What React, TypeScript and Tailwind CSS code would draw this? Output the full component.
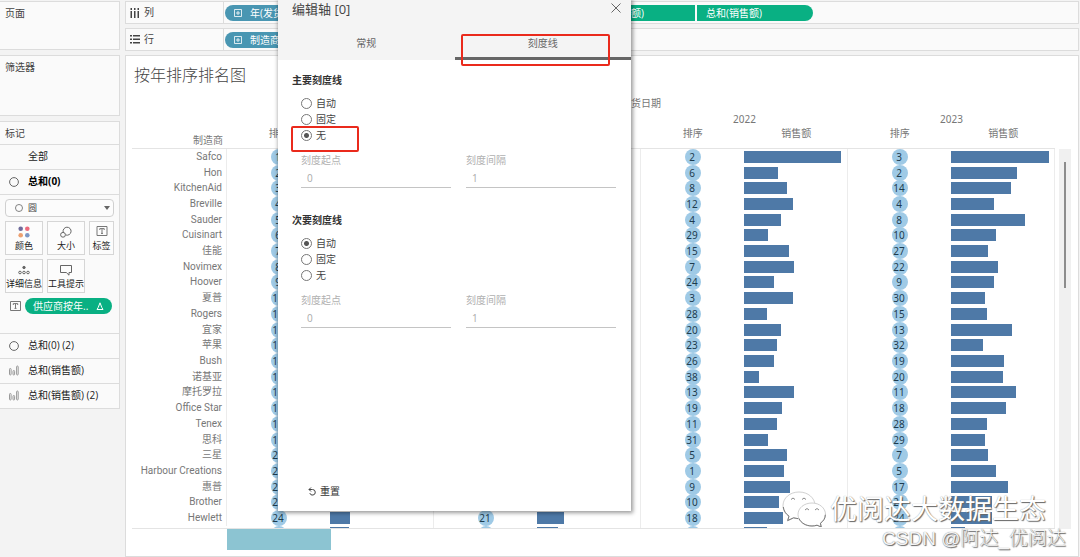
import type { ReactNode } from "react";

type Row = { name: string; y20: number; y22: [number, number]; y23: [number, number] };

// Sales values are percentages of the axis length.
const rows: Row[] = [
  { name: "Safco", y20: 1, y22: [2, 94], y23: [3, 95] },
  { name: "Hon", y20: 2, y22: [6, 33], y23: [2, 64] },
  { name: "KitchenAid", y20: 3, y22: [8, 42], y23: [14, 58] },
  { name: "Breville", y20: 4, y22: [12, 48], y23: [4, 42] },
  { name: "Sauder", y20: 5, y22: [4, 36], y23: [8, 72] },
  { name: "Cuisinart", y20: 6, y22: [29, 23], y23: [10, 44] },
  { name: "佳能", y20: 7, y22: [15, 44], y23: [27, 36] },
  { name: "Novimex", y20: 8, y22: [7, 49], y23: [22, 46] },
  { name: "Hoover", y20: 9, y22: [24, 29], y23: [9, 42] },
  { name: "夏普", y20: 10, y22: [3, 48], y23: [30, 33] },
  { name: "Rogers", y20: 11, y22: [28, 22], y23: [15, 35] },
  { name: "宜家", y20: 12, y22: [20, 36], y23: [13, 59] },
  { name: "苹果", y20: 13, y22: [23, 32], y23: [32, 31] },
  { name: "Bush", y20: 14, y22: [26, 29], y23: [19, 51] },
  { name: "诺基亚", y20: 15, y22: [38, 15], y23: [20, 50] },
  { name: "摩托罗拉", y20: 16, y22: [13, 49], y23: [11, 63] },
  { name: "Office Star", y20: 17, y22: [19, 37], y23: [18, 53] },
  { name: "Tenex", y20: 18, y22: [11, 32], y23: [28, 35] },
  { name: "思科", y20: 19, y22: [31, 23], y23: [29, 33] },
  { name: "三星", y20: 20, y22: [5, 42], y23: [7, 36] },
  { name: "Harbour Creations", y20: 21, y22: [1, 39], y23: [5, 44] },
  { name: "惠普", y20: 22, y22: [9, 45], y23: [17, 55] },
  { name: "Brother", y20: 23, y22: [10, 34], y23: [21, 40] },
  { name: "Hewlett", y20: 24, y22: [18, 38], y23: [24, 40] },
];

const years = ["2020", "2021", "2022", "2023"];

// Bars of the row that is only partly scrolled into view.
const nextRow = [18, 20, 22, 14];

function RowIcon() {
  return (
    <svg width="10" height="9" viewBox="0 0 10 9" className="fill-[#444]">
      <path d="M0 0h2v1.500H0zM3 0h7v1.500H3zM0 3.500h2V5H0zM3 3.500h7V5H3zM0 7h2v1.500H0zM3 7h7v1.500H3z" />
    </svg>
  );
}

function ColumnIcon() {
  return (
    <svg width="10" height="10" viewBox="0 0 10 10" className="fill-[#444]">
      <path d="M.5 0h1.500v2H.5zM.5 3h1.500v7H.5zM4 0h1.500v2H4zM4 3h1.500v7H4zM7.500 0H9v2H7.500zM7.500 3H9v7H7.500z" />
    </svg>
  );
}

function PlusBox() {
  return (
    <svg width="8" height="8" viewBox="0 0 8 8" fill="none" className="shrink-0 stroke-white/80">
      <path d="M.5.5h7v7h-7zM2 4h4M4 2v4" />
    </svg>
  );
}

function CircleIcon({ size }: { size: number }) {
  return (
    <svg width={size} height={size} viewBox="0 0 10 10" fill="none" className="shrink-0 stroke-[#666]">
      <circle cx="5" cy="5" r="4.400" />
    </svg>
  );
}

function BarsIcon() {
  return (
    <svg width="10" height="11" viewBox="0 0 10 11" fill="none" className="shrink-0 stroke-[#999]">
      <rect x=".5" y="3.500" width="1.600" height="6.500" rx=".8" />
      <rect x="4" y="5.500" width="1.600" height="4.500" rx=".8" />
      <rect x="7.600" y="1" width="1.600" height="9" rx=".8" />
    </svg>
  );
}

function TextIcon({ width }: { width: number }) {
  return (
    <svg width={width} height="10" viewBox="0 0 11 10" fill="none" className="shrink-0 stroke-[#777]">
      <path d="M.5.5h10v9H.5zM3.300 4V2.600h4.400V4M5.500 2.600v4.800M4.500 7.400h2" />
    </svg>
  );
}

function Shelf({ icon, label, children }: { icon: ReactNode; label: string; children: ReactNode }) {
  return (
    <div className="flex h-[23px] items-stretch overflow-hidden border border-[#dcdcdc] bg-[#fafafa]">
      <div className="flex w-[98px] shrink-0 items-center gap-1 border-r border-[#dcdcdc] pl-1 text-[10px] text-[#444]">
        {icon}
        <span>{label}</span>
      </div>
      <div className="flex items-center gap-[2px] pl-px">{children}</div>
    </div>
  );
}

const pillBase = "flex h-4 w-[116px] shrink-0 items-center gap-2 pl-[9px] text-[10px] leading-4 text-white";

function MarkButton({ icon, label }: { icon: ReactNode; label: string }) {
  return (
    <button className="flex h-[34px] flex-col items-center justify-between overflow-hidden border border-[#d6d6d6] bg-[#fcfcfc] pt-1 pb-[2px] text-[9px] leading-3 whitespace-nowrap text-[#222]">
      {icon}
      <span>{label}</span>
    </button>
  );
}

function MarkLayer({ icon, label, strong }: { icon?: ReactNode; label: string; strong?: boolean }) {
  return (
    <button
      className={
        strong
          ? "flex h-[25px] w-full items-center border-t border-[#dcdcdc] pb-px pl-[9px] text-left text-[10px] font-bold text-black"
          : "flex h-[25px] w-full items-center border-t border-[#dcdcdc] pb-px pl-[9px] text-left text-[10px] text-[#222]"
      }
    >
      <span className="flex w-[19px]">{icon}</span>
      {label}
    </button>
  );
}

function Sidebar() {
  return (
    <aside className="flex w-[120px] shrink-0 flex-col gap-[5px] pt-px text-[10px] text-[#444]">
      <section className="h-[49px] border border-l-0 border-[#dcdcdc] bg-[#fafafa] px-[5px] pt-[3px] leading-4">页面</section>
      <section className="h-[61px] border border-l-0 border-[#dcdcdc] bg-[#fafafa] px-[5px] pt-[3px] leading-4">筛选器</section>
      <section className="border border-l-0 border-[#dcdcdc] bg-[#fafafa]">
        <h2 className="h-[22px] px-[5px] pt-[3px] leading-4">标记</h2>
        <MarkLayer label="全部" />
        <MarkLayer icon={<CircleIcon size={10} />} label="总和(0)" strong />
        <div className="border-t border-[#dcdcdc] px-[5px] pt-1">
          <div className="relative">
            <select
              aria-label="标记类型"
              className="block h-[18px] w-full appearance-none rounded-sm border border-[#d0d0d0] bg-[#fcfcfc] pl-[22px] text-[9px] leading-4 text-[#444]"
            >
              <option>圆</option>
            </select>
            <span className="pointer-events-none absolute inset-y-0 left-[10px] flex items-center">
              <CircleIcon size={8} />
            </span>
            <span className="pointer-events-none absolute inset-y-0 right-1 flex items-center">
              <svg width="6" height="4" viewBox="0 0 6 4" className="fill-[#666]">
                <path d="M0 0h6L3 4z" />
              </svg>
            </span>
          </div>
          <div className="mt-1 grid grid-cols-[38px_38px_25px] gap-x-1 gap-y-1">
            <MarkButton
              label="颜色"
              icon={
                <svg width="12" height="12" viewBox="0 0 12 12">
                  <circle cx="2.700" cy="2.700" r="2.300" fill="#6f6b9b" />
                  <circle cx="9.300" cy="2.700" r="2.300" fill="#ed6a7c" />
                  <circle cx="2.700" cy="9.300" r="2.300" fill="#eda070" />
                  <circle cx="9.300" cy="9.300" r="2.300" fill="#7d98c6" />
                </svg>
              }
            />
            <MarkButton
              label="大小"
              icon={
                <svg width="12" height="12" viewBox="0 0 12 12" fill="none" className="stroke-[#666]">
                  <path d="M3.200 6.200A4 4 0 1 1 5.800 9" />
                  <circle cx="3" cy="8.800" r="2.400" />
                </svg>
              }
            />
            <MarkButton label="标签" icon={<TextIcon width={12} />} />
            <MarkButton
              label="详细信息"
              icon={
                <svg width="12" height="12" viewBox="0 0 12 12" fill="none" className="stroke-[#666]">
                  <circle cx="6" cy="3.500" r="1.200" fill="#666" />
                  <circle cx="2" cy="8.500" r="1.300" />
                  <circle cx="6" cy="8.500" r="1.300" />
                  <circle cx="10" cy="8.500" r="1.300" />
                </svg>
              }
            />
            <MarkButton
              label="工具提示"
              icon={
                <svg width="12" height="12" viewBox="0 0 12 12" fill="none" className="stroke-[#666]">
                  <path d="M.5 1.500h11v7H9v2.700L6.300 8.500H.5z" />
                </svg>
              }
            />
          </div>
          <div className="flex h-[40px] items-start gap-1 pt-[5px] pl-[5px]">
            <span className="flex h-4 items-center">
              <TextIcon width={11} />
            </span>
            <button className="flex h-4 w-[87px] items-center justify-between rounded-full bg-[#09b083] pr-2 pl-2 text-[10px] leading-4 text-white">
              供应商按年..
              <svg width="8" height="8" viewBox="0 0 8 8" fill="none" className="stroke-white">
                <path d="M4 .8 5.800 5.500 7 7.500H1l1.200-2z" />
              </svg>
            </button>
          </div>
        </div>
        <MarkLayer icon={<CircleIcon size={10} />} label="总和(0) (2)" />
        <MarkLayer icon={<BarsIcon />} label="总和(销售额)" />
        <MarkLayer icon={<BarsIcon />} label="总和(销售额) (2)" />
      </section>
    </aside>
  );
}

function RankCell({ rank }: { rank: number }) {
  return (
    <td className="flex flex-1 basis-0 items-center justify-center">
      <span className="flex h-4 w-4 shrink-0 items-center justify-center rounded-full bg-[#9fcae6] pr-px text-[10px] leading-4 text-[#1d3b4e]">
        {rank}
      </span>
    </td>
  );
}

function BarCell({ value }: { value: number }) {
  return (
    <td className="flex flex-1 basis-0 items-center border-r border-[#ececec]">
      <div className="h-3 bg-[#4e79a7]" style={{ width: `${value}%` }} />
    </td>
  );
}

function DataRow({ row }: { row: Row }) {
  return (
    <tr className="flex min-h-0 flex-1 basis-0">
      <th
        scope="row"
        className="flex w-[95px] shrink-0 items-center justify-end border-r border-[#ececec] pr-1 font-['Roboto','Noto_Sans_CJK_SC',sans-serif] text-[10px] leading-3 font-normal whitespace-nowrap text-[#777]"
      >
        {row.name}
      </th>
      <RankCell rank={row.y20} />
      <BarCell value={19} />
      <RankCell rank={21} />
      <BarCell value={26} />
      <RankCell rank={row.y22[0]} />
      <BarCell value={row.y22[1]} />
      <RankCell rank={row.y23[0]} />
      <BarCell value={row.y23[1]} />
    </tr>
  );
}

function Worksheet() {
  return (
    <section className="flex-1 border border-[#dcdcdc] bg-white pr-[7px] pl-[6px]">
      <h1 className="pt-2 pl-[2px] font-['Liberation_Serif','Noto_Sans_CJK_SC',serif] text-[16px] leading-6 font-light text-[#444]">
        按年排序排名图
      </h1>
      <div className="mt-[7px] flex items-end">
        <table className="block min-w-0 flex-1 font-['Noto_Sans','Noto_Sans_CJK_SC',sans-serif] text-[10px] text-[#777]">
          <thead className="block border-b border-[#e4e4e4]">
            <tr className="flex h-4 pl-[95px]">
              <th className="flex-1 text-center leading-4 font-normal">发货日期</th>
            </tr>
            <tr className="flex h-[14px] pl-[95px]">
              {years.map((y) => (
                <th key={y} className="flex-1 basis-0 text-center leading-4 font-normal">
                  {y}
                </th>
              ))}
            </tr>
            <tr className="flex h-[23px]">
              <th className="w-[95px] shrink-0 self-end pr-1 text-right leading-4 font-normal">制造商</th>
              {years.map((y) => [
                <th key={`${y}-rank`} className="flex-1 basis-0 text-center leading-4 font-normal">
                  排序
                </th>,
                <th key={`${y}-sales`} className="flex-1 basis-0 text-center leading-4 font-normal">
                  销售额
                </th>,
              ])}
            </tr>
          </thead>
          <tbody className="flex h-[377px] flex-col">
            {rows.map((row) => (
              <DataRow key={row.name} row={row} />
            ))}
          </tbody>
          <tfoot className="block h-[3px] overflow-hidden border-b border-[#e4e4e4]" aria-hidden="true">
            <tr className="flex pl-[95px]">
              {nextRow.map((value, i) => [
                <td key={`${years[i]}-rank`} className="flex flex-1 basis-0 justify-center">
                  <span className="h-4 w-4 rounded-full bg-[#9fcae6]" />
                </td>,
                <td key={`${years[i]}-sales`} className="flex-1 basis-0 border-r border-[#ececec] pt-px">
                  <div className="h-3 bg-[#4e79a7]" style={{ width: `${value}%` }} />
                </td>,
              ])}
            </tr>
          </tfoot>
        </table>
        <div className="ml-1 flex h-[380px] w-3 justify-center bg-[#f0f0f0] pt-[13px]">
          <div className="h-[126px] w-[2px] bg-[#8c8c8c]" />
        </div>
      </div>
      <div className="flex pr-4 pl-[95px]">
        <div className="h-[21px] w-1/8 bg-[#8cc4d2]" />
      </div>
    </section>
  );
}

const radioClass =
  "h-[11px] w-[11px] appearance-none rounded-full border border-[#777] bg-white checked:border-[#777] checked:bg-[radial-gradient(circle,#555_0_2px,transparent_3px)]";

function TickGroup({ id, title, selected, className }: { id: string; title: string; selected: string; className: string }) {
  return (
    <fieldset className={className}>
      <legend className="text-[10px] leading-4 font-semibold text-[#333]">{title}</legend>
      <div className="mt-[7px] flex flex-col pl-[9px]">
        {["自动", "固定", "无"].map((option) => (
          <label key={option} className="flex h-4 items-center gap-1 text-[10px] leading-4 text-[#444]">
            <input type="radio" name={id} defaultChecked={option === selected} className={radioClass} />
            {option}
          </label>
        ))}
      </div>
      <div className="mt-[9px] flex gap-[15px] pl-[9px]">
        <label className="flex-1 text-[10px] leading-4 text-[#b0b0b0]">
          刻度起点
          <input
            disabled
            defaultValue="0"
            className="mt-px block h-[19px] w-full border-b border-[#c4c4c4] pl-[6px] text-[10px] text-[#aaa]"
          />
        </label>
        <label className="flex-1 text-[10px] leading-4 text-[#b0b0b0]">
          刻度间隔
          <input
            disabled
            defaultValue="1"
            className="mt-px block h-[19px] w-full border-b border-[#c4c4c4] pl-[6px] text-[10px] text-[#aaa]"
          />
        </label>
      </div>
    </fieldset>
  );
}

function AxisDialog() {
  return (
    <div
      role="dialog"
      aria-label="编辑轴 [0]"
      className="absolute top-0 left-[278px] z-10 flex h-[511px] w-[353px] flex-col bg-white shadow-[1px_1px_4px_1px_rgba(0,0,0,0.4)]"
    >
      <header className="bg-[#f4f4f4]">
        <div className="flex h-7 items-start justify-between pr-[10px] pl-[14px]">
          <h2 className="text-[13px] leading-[18px] text-[#444]">编辑轴 [0]</h2>
          <button aria-label="关闭" className="pt-[3px]">
            <svg width="10" height="10" viewBox="0 0 10 10" fill="none" className="stroke-[#666]">
              <path d="M.5.5l9 9M9.500.5l-9 9" />
            </svg>
          </button>
        </div>
        <div role="tablist" className="flex h-8 text-[10px] text-[#666]">
          <button role="tab" aria-selected="false" className="flex-1 border-b-3 border-transparent leading-4">
            常规
          </button>
          <button role="tab" aria-selected="true" className="flex-1 border-b-3 border-[#666] leading-4">
            刻度线
          </button>
        </div>
      </header>
      <div className="flex flex-1 flex-col pt-3 pr-[15px] pb-3 pl-[14px]">
        <TickGroup id="major" title="主要刻度线" selected="无" className="" />
        <TickGroup id="minor" title="次要刻度线" selected="自动" className="mt-6" />
        <button className="mt-auto flex items-center gap-1 self-start pl-4 text-[10px] leading-4 text-[#333]">
          <svg width="8" height="9" viewBox="0 0 8 9" fill="none" className="stroke-[#444]">
            <path d="M1 2.500h3.500a2.800 2.800 0 1 1-2.700 3.600M3 .5 1 2.500l2 2" />
          </svg>
          重置
        </button>
      </div>
      <div className="pointer-events-none absolute top-[34px] left-[183px] h-8 w-[149px] rounded-xs border-2 border-[#ea2a1c]" />
      <div className="pointer-events-none absolute top-[126px] left-[13px] h-[26px] w-[68px] rounded-xs border-2 border-[#ea2a1c]" />
    </div>
  );
}

function Watermark() {
  return (
    <div className="pointer-events-none absolute right-[14px] bottom-[6px] z-20 flex flex-col items-end">
      <div className="mr-5 flex items-center gap-1 text-[27px] leading-8 text-white [text-shadow:1px_1px_1px_#666,0_0_1px_#999]">
        <svg width="44" height="36" viewBox="0 0 44 36" fill="none">
          <path
            className="fill-white stroke-[#bbb]"
            strokeWidth=".7"
            d="M17 1C8 1 1 7 1 14.500c0 4.500 2.500 8 6 10.500L5.500 30l6-3c2 .5 4 .8 6 .8C27 28 33 22 33 14.500 33 7 26 1 17 1z"
          />
          <path
            className="fill-white stroke-[#bbb]"
            strokeWidth=".7"
            d="M30 12c-8 0-14 5-14 11.500S22 35 30 35c2 0 3.500-.3 5-.8l4.500 2-1-4c3-2 5-5 5-8.700C43.500 17 37.500 12 30 12z"
          />
          <path
            className="stroke-[#777]"
            d="M1.300 16c.5 4 2.500 7 5.700 9.200L5.700 29.500l5.800-2.700 4.500.8M17 27.500c2 4.500 7 7.500 13 7.500 2 0 3.500-.3 5-.8l4.200 1.800-.8-3.800c3-2 4.900-5 4.900-8.500"
          />
          <path className="stroke-[#888]" d="M9 8.500q2-3 4 0M20 8.500q2-3 4 0M23 19q2-3 4 0M33 19q2-3 4 0" />
        </svg>
        <span>优阅达大数据生态</span>
      </div>
      <div className="font-['Liberation_Sans','Noto_Sans_CJK_SC',sans-serif] text-[19px] leading-6 font-light text-[#f4f4f4] [text-shadow:1px_1px_1px_#666,0_0_1px_#777]">
        CSDN @阿达_优阅达
      </div>
    </div>
  );
}

export default function App() {
  return (
    <div className="relative flex min-h-screen overflow-hidden bg-[#f3f3f3] pr-px font-['Open_Sans','Noto_Sans_CJK_SC',sans-serif]">
      <Sidebar />
      <main className="ml-[5px] flex min-w-0 flex-1 flex-col gap-1 pt-px">
        <Shelf icon={<ColumnIcon />} label="列">
          <button className={`${pillBase} rounded-l-full bg-[#4996b2]`}>
            <PlusBox />
            年(发货日期)
          </button>
          <button className={`${pillBase} bg-[#09b083]`}>总和(0)</button>
          <button className={`${pillBase} bg-[#09b083]`}>总和(0)</button>
          <button className={`${pillBase} bg-[#09b083]`}>总和(销售额)</button>
          <button className={`${pillBase} rounded-r-full bg-[#09b083]`}>总和(销售额)</button>
        </Shelf>
        <Shelf icon={<RowIcon />} label="行">
          <button className={`${pillBase} rounded-full bg-[#4996b2]`}>
            <PlusBox />
            制造商
          </button>
        </Shelf>
        <Worksheet />
      </main>
      <AxisDialog />
      <Watermark />
    </div>
  );
}
